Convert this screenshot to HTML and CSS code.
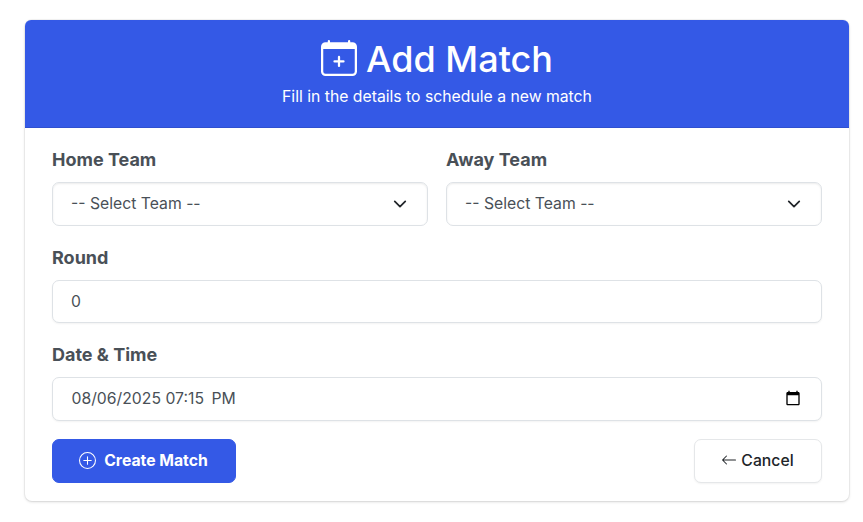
FILE: index.html
```html
<!DOCTYPE html>
<html lang="en">
<head>
<meta charset="utf-8">
<title>Add Match</title>
<link rel="stylesheet" href="styles.css">
</head>
<body>
<main class="card">
  <header class="card-header">
    <h1 class="title">
      <svg class="title-icon" viewBox="0 0 16 16" fill="currentColor"><path d="M8 7a.5.5 0 0 1 .5.5V9H10a.5.5 0 0 1 0 1H8.5v1.5a.5.5 0 0 1-1 0V10H6a.5.5 0 0 1 0-1h1.5V7.5A.5.5 0 0 1 8 7"/><path d="M3.5 0a.5.5 0 0 1 .5.5V1h8V.5a.5.5 0 0 1 1 0V1h1a2 2 0 0 1 2 2v11a2 2 0 0 1-2 2H2a2 2 0 0 1-2-2V3a2 2 0 0 1 2-2h1V.5a.5.5 0 0 1 .5-.5M1 4v10a1 1 0 0 0 1 1h12a1 1 0 0 0 1-1V4z"/></svg>
      <span>Add Match</span>
    </h1>
    <p class="subtitle">Fill in the details to schedule a new match</p>
  </header>
  <form class="card-body">
    <div class="row">
      <div class="field">
        <label class="label" for="home">Home Team</label>
        <select class="control select" id="home"><option>-- Select Team --</option></select>
      </div>
      <div class="field">
        <label class="label" for="away">Away Team</label>
        <select class="control select" id="away"><option>-- Select Team --</option></select>
      </div>
    </div>
    <div class="field round">
      <label class="label" for="round">Round</label>
      <input class="control" id="round" type="text" value="0">
    </div>
    <div class="field">
      <span class="label">Date &amp; Time</span>
      <div class="control date">
        <span class="date-text"><span>08/06/2025</span><span>07:15</span><span class="meridiem">PM</span></span>
        <svg class="date-icon" viewBox="0 0 24 24"><path d="M20 3h-1V1h-2v2H7V1H5v2H4c-1.100 0-2 .9-2 2v16c0 1.100.9 2 2 2h16c1.100 0 2-.9 2-2V5c0-1.100-.9-2-2-2zm0 18H4V8h16v13z"/></svg>
      </div>
    </div>
    <div class="actions">
      <button class="btn btn-primary" type="button">
        <svg class="btn-icon" viewBox="0 0 16 16" fill="currentColor"><path d="M8 15A7 7 0 1 1 8 1a7 7 0 0 1 0 14m0 1A8 8 0 1 0 8 0a8 8 0 0 0 0 16"/><path d="M8 4a.5.5 0 0 1 .5.5v3h3a.5.5 0 0 1 0 1h-3v3a.5.5 0 0 1-1 0v-3h-3a.5.5 0 0 1 0-1h3v-3A.5.5 0 0 1 8 4"/></svg>
        <span>Create Match</span>
      </button>
      <button class="btn btn-light" type="button">
        <svg class="arrow-icon" viewBox="0 0 16 16" fill="currentColor"><path fill-rule="evenodd" d="M15 8a.5.5 0 0 0-.5-.5H2.707l3.147-3.146a.5.5 0 1 0-.708-.708l-4 4a.5.5 0 0 0 0 .708l4 4a.5.5 0 0 0 .708-.708L2.707 8.500H14.500A.5.5 0 0 0 15 8"/></svg>
        <span>Cancel</span>
      </button>
    </div>
  </form>
</main>
</body>
</html>
```

FILE: styles.css
```css
* { box-sizing: border-box; }

body {
  min-height: 522px;
  margin: 0;
  padding: 20px 14px 0 25px;
  background: #fff;
  color: #495057;
  font-family: Inter, "Liberation Sans", sans-serif;
  font-size: 15.75px;
}

.card {
  height: 481px;
  border-radius: 7px;
  background: #fff;
  box-shadow: 0 0 0 1px rgba(0, 0, 0, .04), 0 1px 3px rgba(0, 0, 0, .15);
}

.card-header {
  height: 108px;
  padding-top: 16px;
  border-bottom: 1px solid #2f50cf;
  border-radius: 6px 6px 0 0;
  background: #3459e6;
  color: #fff;
  text-align: center;
}

.title {
  display: flex;
  align-items: center;
  justify-content: center;
  gap: 9px;
  height: 46px;
  margin: 0;
  font-size: 36px;
  font-weight: 500;
  line-height: 46px;
}

.title-icon { width: 36px; height: 36px; margin-top: -2px; }

.subtitle { margin: 2px 0 0; line-height: 25px; }

.card-body { padding: 18px 27px 0; }

.row { display: flex; gap: 18px; }

.field { flex: 1; }

.round { margin: 18px 0; }

.label {
  display: block;
  height: 27px;
  margin-bottom: 9px;
  font-size: 18px;
  font-weight: 700;
  line-height: 27px;
}

.control {
  display: block;
  width: 100%;
  height: 44px;
  padding: 0 18px 1px;
  border: 1px solid #dee2e6;
  border-radius: 7px;
  background: #fff;
  box-shadow: 0 1px 2px rgba(0, 0, 0, .05);
  color: #495057;
  font: inherit;
}

.select {
  appearance: none;
  background: #fff url("data:image/svg+xml,%3csvg xmlns='http://www.w3.org/2000/svg' viewBox='0 0 16 16'%3e%3cpath fill='none' stroke='%23212529' stroke-linecap='round' stroke-linejoin='round' stroke-width='2' d='m2 5 6 6 6-6'/%3e%3c/svg%3e") no-repeat right 20px center / 14px 14px;
  box-shadow: inset 0 1px 2px rgba(0, 0, 0, .08);
}

.round .control { height: 43px; }

.date { display: flex; align-items: center; justify-content: space-between; }
.date-text { display: flex; gap: 4.5px; padding-left: .5px; }
.meridiem { margin-left: 3px; }
.date-icon { width: 16px; height: 16px; margin: -1px 2px 0 0; fill: #000; }

.actions { display: flex; justify-content: space-between; margin-top: 18px; }

.btn {
  display: flex;
  align-items: center;
  justify-content: center;
  height: 44px;
  padding: 0 1px 2px 0;
  border: 1px solid #3459e6;
  border-radius: 7px;
  font: inherit;
}

.btn-primary { width: 184px; gap: 8px; background: #3459e6; color: #fff; font-weight: 700; }
.btn-light { width: 128px; gap: 4px; border-color: #e5e7e9; background: #fff; box-shadow: 0 1px 2px rgba(0, 0, 0, .05); color: #212529; font-weight: 500; }
.btn-icon { width: 17px; height: 17px; }
.arrow-icon { width: 16px; height: 16px; }
```
